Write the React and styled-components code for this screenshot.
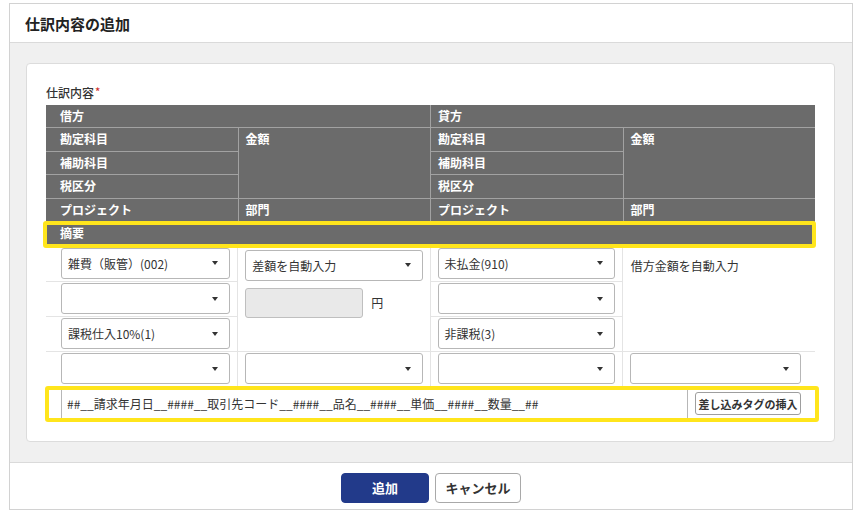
import React from 'react'
import styled, { createGlobalStyle } from 'styled-components'

const GlobalStyle = createGlobalStyle`
  html, body {
    margin: 0;
    padding: 0;
    background: #fff;
  }
  body {
    font-family: 'Noto Sans CJK JP', 'Noto Sans', sans-serif;
    color: #333;
  }
  * {
    box-sizing: border-box;
  }
`

const Page = styled.div`
  width: 859px;
  height: 514px;
  padding: 3px 0 0 9px;
`

const Frame = styled.div`
  width: 844px;
  border: 1px solid #d2d2d2;
  background: #fff;
`

const TitleBar = styled.div`
  height: 39px;
  display: flex;
  align-items: center;
  padding-left: 15px;
  border-bottom: 1px solid #dadada;
`

const Title = styled.h1`
  margin: 0;
  font-size: 15px;
  font-weight: 700;
  color: #222;
`

const Body = styled.div`
  background: #f0f0f0;
  padding: 20px 17px 20px 16px;
`

const Card = styled.div`
  background: #fff;
  border: 1px solid #dcdcdc;
  border-radius: 4px;
  padding: 20px 19px 19px 19px;
`

const FieldLabel = styled.div`
  font-size: 12px;
  font-weight: 500;
  line-height: 18px;
  margin-bottom: 3px;
  color: #333;
`

const Required = styled.span`
  color: #d0312d;
  font-size: 11px;
  margin-left: 1px;
  vertical-align: top;
  line-height: 14px;
`

const HeadGrid = styled.div`
  display: grid;
  grid-template-columns: repeat(4, 1fr);
  grid-template-rows: repeat(5, 22.4px) 24px;
  gap: 1px;
  background: #a2a2a2;
`

const HeadCell = styled.div`
  position: relative;
  background: #6b6b6b;
  color: #fff;
  font-size: 12px;
  font-weight: 700;
  line-height: 16px;
  padding: 3px 0 0 ${p => (p.$first ? 14 : 7)}px;
  grid-column: ${p => p.$col || 'auto'};
  grid-row: ${p => p.$row || 'auto'};
`

const Highlight = styled.div`
  position: absolute;
  top: ${p => p.$t}px;
  left: ${p => p.$l}px;
  right: ${p => p.$r}px;
  bottom: ${p => p.$b}px;
  border: 4px solid #ffe51c;
  border-radius: 3px;
  pointer-events: none;
  z-index: 2;
`

const BodyGrid = styled.div`
  display: grid;
  grid-template-columns: repeat(4, 1fr);
  grid-template-rows: 36px 35px 35px 34px 36px;
`

const Cell = styled.div`
  display: flex;
  flex-direction: ${p => (p.$stack ? 'column' : 'row')};
  align-items: ${p => (p.$stack ? 'stretch' : 'center')};
  padding: ${p => (p.$stack ? '4px' : '0')} ${p => (p.$last ? 14 : 7)}px 0 ${p => (p.$first ? 15 : 7)}px;
  border-right: ${p => (p.$last ? 'none' : '1px solid #e4e4e4')};
  border-bottom: ${p => (p.$line ? '1px solid #e4e4e4' : 'none')};
  grid-column: ${p => p.$col};
  grid-row: ${p => p.$row};
`

const SummaryRow = styled.div`
  position: relative;
  grid-column: 1 / 5;
  grid-row: 5;
  display: flex;
  align-items: center;
  gap: 7px;
  padding: 1px 14px 1px 15px;
`

const SelectBox = styled.div`
  width: 100%;
  height: 31px;
  flex-shrink: 0;
  display: flex;
  align-items: center;
  justify-content: space-between;
  padding: 0 11px 0 6px;
  border: 1px solid #b7b7b7;
  border-radius: 3px;
  background: #fff;
  font-size: 12px;
  color: #333;
`

const Caret = styled.span`
  width: 0;
  height: 0;
  border-left: 3.5px solid transparent;
  border-right: 3.5px solid transparent;
  border-top: 4px solid #333;
`

const AmountRow = styled.div`
  display: flex;
  align-items: center;
  gap: 8px;
  margin-top: 7px;
  font-size: 12px;
`

const AmountInput = styled.div`
  width: 118px;
  height: 30px;
  background: #e9e9e9;
  border: 1px solid #bfbfbf;
  border-radius: 3px;
`

const Note = styled.div`
  font-size: 12px;
  line-height: 31px;
  padding-left: 1px;
  color: #333;
`

const TextField = styled.div`
  flex: 1;
  height: 34px;
  display: flex;
  align-items: center;
  padding-left: 5px;
  border: 1px solid #b7b7b7;
  border-radius: 3px;
  font-size: 12px;
  color: #333;
  white-space: nowrap;
`

const TagButton = styled.button`
  width: 106px;
  height: 23px;
  padding: 0;
  border: 1px solid #9e9e9e;
  border-radius: 3px;
  background: #fff;
  font-family: inherit;
  font-size: 11px;
  font-weight: 700;
  color: #333;
`

const Footer = styled.div`
  display: flex;
  justify-content: center;
  gap: 6px;
  padding: 10px 0 6px;
  border-top: 1px solid #dadada;
`

const Button = styled.button`
  width: ${p => (p.$primary ? 88 : 86)}px;
  height: 30px;
  border-radius: 4px;
  border: 1px solid ${p => (p.$primary ? '#223a8a' : '#a9a9a9')};
  background: ${p => (p.$primary ? '#223a8a' : '#fff')};
  color: ${p => (p.$primary ? '#fff' : '#333')};
  font-family: inherit;
  font-size: 13px;
  font-weight: 700;
`

const Select = ({ value }) => (
  <SelectBox>
    <span>{value}</span>
    <Caret />
  </SelectBox>
)

export default function App() {
  return (
    <Page>
      <GlobalStyle />
      <Frame>
        <TitleBar>
          <Title>仕訳内容の追加</Title>
        </TitleBar>
        <Body>
          <Card>
            <FieldLabel>
              仕訳内容<Required>*</Required>
            </FieldLabel>

            <HeadGrid>
              <HeadCell $first $col="1 / 3" $row="1">借方</HeadCell>
              <HeadCell $col="3 / 5" $row="1">貸方</HeadCell>
              <HeadCell $first $col="1" $row="2">勘定科目</HeadCell>
              <HeadCell $col="2" $row="2 / 5">金額</HeadCell>
              <HeadCell $col="3" $row="2">勘定科目</HeadCell>
              <HeadCell $col="4" $row="2 / 5">金額</HeadCell>
              <HeadCell $first $col="1" $row="3">補助科目</HeadCell>
              <HeadCell $col="3" $row="3">補助科目</HeadCell>
              <HeadCell $first $col="1" $row="4">税区分</HeadCell>
              <HeadCell $col="3" $row="4">税区分</HeadCell>
              <HeadCell $first $col="1" $row="5">プロジェクト</HeadCell>
              <HeadCell $col="2" $row="5">部門</HeadCell>
              <HeadCell $col="3" $row="5">プロジェクト</HeadCell>
              <HeadCell $col="4" $row="5">部門</HeadCell>
              <HeadCell $first $col="1 / 5" $row="6">
                摘要
                <Highlight $t={-1} $l={-3} $r={-1} $b={-2} />
              </HeadCell>
            </HeadGrid>

            <BodyGrid>
              <Cell $first $line $col="1" $row="1"><Select value="雑費（販管）(002)" /></Cell>
              <Cell $first $line $col="1" $row="2"><Select value="" /></Cell>
              <Cell $first $line $col="1" $row="3"><Select value="課税仕入10%(1)" /></Cell>
              <Cell $first $col="1" $row="4"><Select value="" /></Cell>

              <Cell $stack $line $col="2" $row="1 / 4">
                <Select value="差額を自動入力" />
                <AmountRow>
                  <AmountInput />
                  <span>円</span>
                </AmountRow>
              </Cell>
              <Cell $col="2" $row="4"><Select value="" /></Cell>

              <Cell $line $col="3" $row="1"><Select value="未払金(910)" /></Cell>
              <Cell $line $col="3" $row="2"><Select value="" /></Cell>
              <Cell $line $col="3" $row="3"><Select value="非課税(3)" /></Cell>
              <Cell $col="3" $row="4"><Select value="" /></Cell>

              <Cell $stack $last $line $col="4" $row="1 / 4">
                <Note>借方金額を自動入力</Note>
              </Cell>
              <Cell $last $col="4" $row="4"><Select value="" /></Cell>

              <SummaryRow>
                <TextField>##__請求年月日__####__取引先コード__####__品名__####__単価__####__数量__##</TextField>
                <TagButton>差し込みタグの挿入</TagButton>
                <Highlight $t={0} $l={-1} $r={-4} $b={0} />
              </SummaryRow>
            </BodyGrid>
          </Card>
        </Body>
        <Footer>
          <Button $primary>追加</Button>
          <Button>キャンセル</Button>
        </Footer>
      </Frame>
    </Page>
  )
}
